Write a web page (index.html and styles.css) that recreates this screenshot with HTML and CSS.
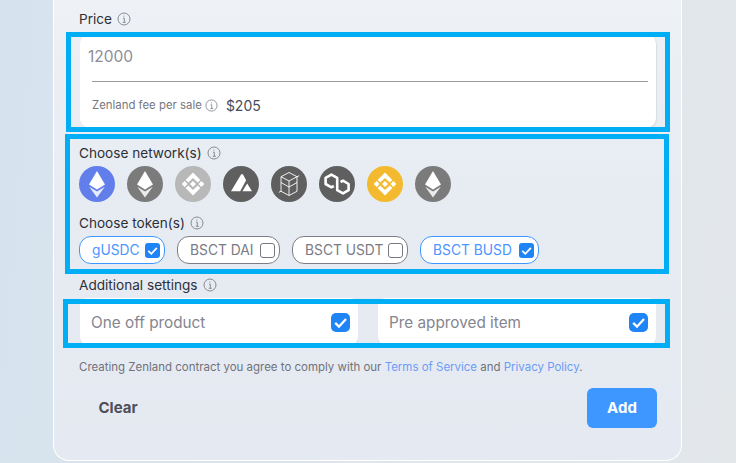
FILE: index.html
```html
<!DOCTYPE html>
<html lang="en">
<head>
<meta charset="utf-8">
<title>Add item</title>
<link rel="stylesheet" href="styles.css">
</head>
<body>
<svg class="defs" width="0" height="0" aria-hidden="true">
  <symbol id="info" viewBox="0 0 14 14">
    <circle cx="7" cy="7" r="6" fill="none" stroke="currentColor" stroke-width="1"/>
    <path d="M6 6.2H7.3V10.2M5.8 10.3H8.8M6.9 3.6V4.7" fill="none" stroke="currentColor" stroke-width="1"/>
  </symbol>
  <symbol id="eth" viewBox="0 0 36 36">
    <path d="M18 5L26 18.6L18 23.4L10 18.6Z" fill="#fff"/>
    <path d="M10.2 20.8L18 25.6L25.8 20.8L18 31.5Z" fill="#fff" fill-opacity=".85"/>
  </symbol>
  <symbol id="bnb" viewBox="0 0 36 36">
    <path d="M18 6.5L25.4 13.9L22.7 16.6L18 11.9L13.3 16.6L10.6 13.9ZM18 29.5L25.4 22.1L22.7 19.4L18 24.1L13.3 19.4L10.6 22.1ZM18 15L21 18L18 21L15 18ZM9.6 15.1L12.5 18L9.6 20.9L6.7 18ZM26.4 15.1L29.3 18L26.4 20.9L23.5 18Z" fill="#fff"/>
  </symbol>
  <symbol id="check" viewBox="0 0 20 20">
    <path d="M4.4 10.4L8.4 14.4L15.8 6.4" fill="none" stroke="#fff" stroke-width="2.4"/>
  </symbol>
</svg>
<main class="card">
  <div class="label">Price <svg class="info"><use href="#info"/></svg></div>
  <section class="price-field">
    <div class="price-input">12000</div>
    <div class="fee">
      <span class="fee-label">Zenland fee per sale</span>
      <svg class="info info-small"><use href="#info"/></svg>
      <span class="fee-value">$205</span>
    </div>
  </section>

  <div class="label label-network">Choose network(s) <svg class="info"><use href="#info"/></svg></div>
  <div class="networks">
    <svg class="net net-blue" viewBox="0 0 36 36"><use href="#eth"/></svg>
    <svg class="net net-gray" viewBox="0 0 36 36"><use href="#eth"/></svg>
    <svg class="net net-light" viewBox="0 0 36 36"><use href="#bnb"/></svg>
    <svg class="net net-dark" viewBox="0 0 36 36">
      <path d="M18.2 8.2L19.9 8.2L23.1 14.2L17.2 25.2L8 25.2Z" fill="#fff"/>
      <path d="M24.2 17.6L29 25.2L19.4 25.2Z" fill="#fff"/>
    </svg>
    <svg class="net net-dark" viewBox="0 0 36 36">
      <path d="M18 6.5L26 10.7V25.3L18 29.5L10 25.3V10.7L18 6.5ZM10 10.7L18 15L26 10.7M18 15V21M10 16.5L18 21L26 16.5M10 25.3L7.8 26.3M26 10.7L28.2 9.7M18 21V29.5" fill="none" stroke="#fff" stroke-width=".9"/>
    </svg>
    <svg class="net net-dark" viewBox="0 0 36 36">
      <path d="M14.8 20L12.4 21.3L6.6 18V11.8L12.4 8.6L18.2 11.8V24.2L24 27.4L29.6 24.2V18L24 14.7L21.6 16" fill="none" stroke="#fff" stroke-width="2.6" stroke-linejoin="round"/>
    </svg>
    <svg class="net net-yellow" viewBox="0 0 36 36"><use href="#bnb"/></svg>
    <svg class="net net-gray" viewBox="0 0 36 36"><use href="#eth"/></svg>
  </div>

  <div class="label label-token">Choose token(s) <svg class="info"><use href="#info"/></svg></div>
  <div class="tokens">
    <div class="token token-on token-gusdc">gUSDC <span class="box box-on"><svg><use href="#check"/></svg></span></div>
    <div class="token token-dai">BSCT DAI <span class="box"></span></div>
    <div class="token token-usdt">BSCT USDT <span class="box"></span></div>
    <div class="token token-on token-busd">BSCT BUSD <span class="box box-on"><svg><use href="#check"/></svg></span></div>
  </div>

  <div class="label label-token">Additional settings <svg class="info"><use href="#info"/></svg></div>
  <div class="settings">
    <div class="setting">One off product <span class="box box-on box-large"><svg><use href="#check"/></svg></span></div>
    <div class="setting">Pre approved item <span class="box box-on box-large"><svg><use href="#check"/></svg></span></div>
  </div>

  <p class="terms">Creating Zenland contract you agree to comply with our <a href="#">Terms of Service</a> and <a href="#">Privacy Policy</a>.</p>

  <div class="actions">
    <button class="btn btn-clear" type="button">Clear</button>
    <button class="btn btn-add" type="button">Add</button>
  </div>
</main>
<div class="mark mark-price"></div>
<div class="mark mark-network"></div>
<div class="mark mark-settings"></div>
</body>
</html>
```
FILE: styles.css
```css
* { box-sizing: border-box; }
html, body { margin: 0; padding: 0; }
body {
  position: relative;
  width: 736px;
  height: 463px;
  overflow: hidden;
  font-family: Inter, "Liberation Sans", sans-serif;
  background: linear-gradient(95deg, #d6e3ee 0%, #dfe5ea 60%, #e3e7ea 100%);
}
.defs { position: absolute; }
.card {
  width: 629px;
  height: 461px;
  margin-left: 53px;
  padding: 9px 24px 0 25px;
  border: 1px solid #fff;
  border-top: 0;
  border-radius: 0 0 16px 16px;
  background: linear-gradient(180deg, #eef1f5 0%, #e7ecf3 40%, #e5e9f1 100%);
}
.label {
  display: flex;
  align-items: center;
  gap: 5px;
  height: 20px;
  font-size: 13.6px;
  color: #2c2f38;
}
.info { width: 14px; height: 14px; color: #868b95; }
.info-small { width: 13px; height: 13px; }
.price-field {
  height: 94px;
  margin: 5px 1px 0 1px;
  background: #fff;
  border-radius: 10px;
  box-shadow: 1px 1px 1px #d9dde2;
}
.price-input {
  height: 48px;
  margin-left: 12px;
  margin-right: 8px;
  padding: 13px 0 0 0;
  font-size: 15.5px;
  line-height: 20px;
  color: #8d8d99;
  border-bottom: 1px solid #9a9a9a;
  text-indent: -4px;
}
.fee {
  display: flex;
  align-items: center;
  gap: 3px;
  height: 46px;
  padding-left: 12px;
}
.fee-label { font-size: 11.4px; color: #77777f; }
.fee-value { margin-left: 5px; font-size: 14px; color: #4a4d57; }
.label-network { margin-top: 15px; }
.label-token { margin-top: 11px; }
.networks { display: flex; gap: 12px; margin-top: 3px; }
.net { width: 36px; height: 36px; border-radius: 50%; }
.net-blue { background: #627eea; }
.net-gray { background: #7b7b7b; }
.net-light { background: #b8b8b8; }
.net-dark { background: #5f5f5f; }
.net-yellow { background: #f3ba2f; }
.tokens { display: flex; gap: 12px; margin-top: 3px; }
.token {
  display: flex;
  align-items: center;
  justify-content: space-between;
  height: 28px;
  padding: 0 4px 0 12px;
  border: 1px solid #7d7d86;
  border-radius: 12px;
  background: #fff;
  font-size: 13.8px;
  color: #7a7a84;
}
.token-on { border-color: #3d97ff; color: #4c94ff; }
.token-gusdc { width: 86px; }
.token-dai { width: 103px; }
.token-usdt { width: 116px; }
.token-busd { width: 119px; }
.box {
  display: block;
  flex: none;
  width: 15px;
  height: 15px;
  border: 1.5px solid #77777f;
  border-radius: 3px;
  background: #fff;
}
.box svg { display: block; width: 100%; height: 100%; }
.box-on { border: 0; background: #1f84f5; }
.box-large { width: 19px; height: 19px; border-radius: 5px; }
.settings { display: flex; gap: 20px; margin: 3px 1px 0 1px; }
.setting {
  flex: 1;
  display: flex;
  align-items: center;
  justify-content: space-between;
  height: 47px;
  padding: 2px 8px 0 11px;
  border-radius: 8px;
  background: #fff;
  box-shadow: 0 1px 1px #d9dde2;
  font-size: 15.3px;
  color: #85858f;
}
.terms {
  height: 16px;
  margin: 14px 0 0;
  font-size: 11.47px;
  line-height: 16px;
  color: #70727c;
}
.terms a { color: #6c9cf5; text-decoration: none; }
.actions {
  display: flex;
  justify-content: space-between;
  margin-top: 13px;
}
.btn {
  width: 70px;
  height: 40px;
  padding: 0 0 2px;
  border: 0;
  border-radius: 6px;
  font-family: inherit;
  font-size: 15px;
  font-weight: 700;
  background: transparent;
}
.btn-clear { width: 78px; color: #4f4f59; }
.btn-add { background: #3d97ff; color: #fff; }
.mark {
  position: absolute;
  border: 5px solid #00aef5;
  pointer-events: none;
}
.mark-price { left: 66px; top: 32px; width: 604px; height: 100px; }
.mark-network { left: 65px; top: 134px; width: 604px; height: 140px; }
.mark-settings { left: 63px; top: 299px; width: 607px; height: 49px; }
```
